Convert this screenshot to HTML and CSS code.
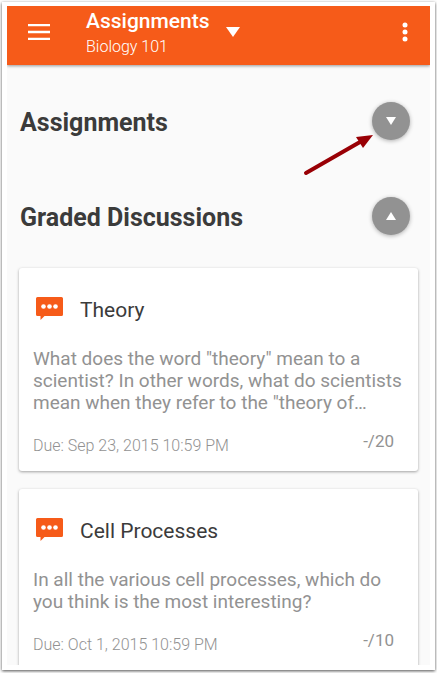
FILE: index.html
```
<!DOCTYPE html>
<html lang="en">
<head>
    <meta charset="UTF-8">
    <meta name="viewport" content="width=device-width, initial-scale=1.0">
    <title>Assignments - Biology 101</title>
    <link rel="stylesheet" href="styles.css">
</head>
<body>

    <div class="frame">
        <div class="screen">
            <header class="toolbar">
                <button class="icon-btn" aria-label="Menu">
                    <svg width="22" height="16" viewBox="0 0 22 16"><path d="M0 1h22M0 8h22M0 15h22" stroke="#fff" stroke-width="2.300"/></svg>
                </button>
                <button class="course">
                    <span class="course-text">
                        <span class="course-title">Assignments</span>
                        <span class="course-name">Biology 101</span>
                    </span>
                    <svg width="14" height="10" viewBox="0 0 14 10"><path d="M0 0h14L7 10z" fill="#fff"/></svg>
                </button>
                <button class="icon-btn more" aria-label="More options">
                    <svg width="6" height="20" viewBox="0 0 6 20" fill="#fff"><circle cx="3" cy="3" r="2.500"/><circle cx="3" cy="10" r="2.500"/><circle cx="3" cy="17" r="2.500"/></svg>
                </button>
            </header>

            <main>
                <section class="group">
                    <h2>Assignments</h2>
                    <button class="toggle" aria-label="Expand Assignments">
                        <svg width="10" height="8" viewBox="0 0 10 8"><path d="M0 0h10L5 8z" fill="#fff"/></svg>
                    </button>
                    <svg class="arrow" width="70" height="42" viewBox="0 0 70 42">
                        <path d="M3 39L57 8" stroke="#990005" stroke-width="4" stroke-linecap="round"/>
                        <path d="M70 1L53 3l7 11z" fill="#990005"/>
                    </svg>
                </section>

                <section class="group">
                    <h2>Graded Discussions</h2>
                    <button class="toggle" aria-label="Collapse Graded Discussions">
                        <svg width="10" height="8" viewBox="0 0 10 8"><path d="M0 8h10L5 0z" fill="#fff"/></svg>
                    </button>
                </section>

                <div class="cards">
                    <article class="card">
                        <h3>
                            <svg width="27" height="23" viewBox="0 0 27 23"><path d="M1.500 0h24a1.500 1.500 0 0 1 1.500 1.500v16a1.500 1.500 0 0 1-1.500 1.500H8.500l-4 4v-4h-3a1.500 1.500 0 0 1-1.500-1.500v-16a1.500 1.500 0 0 1 1.500-1.500z" fill="#f65b19"/><g fill="#fff"><circle cx="7.500" cy="9.500" r="2.300"/><circle cx="13.500" cy="9.500" r="2.300"/><circle cx="19.500" cy="9.500" r="2.300"/></g></svg>
                            Theory
                        </h3>
                        <p>What does the word "theory" mean to a scientist? In other words, what do scientists mean when they refer to the "theory of…</p>
                        <div class="meta">
                            <span class="due">Due: Sep 23, 2015 10:59 PM</span>
                            <span class="score">-/20</span>
                        </div>
                    </article>

                    <article class="card">
                        <h3>
                            <svg width="27" height="23" viewBox="0 0 27 23"><path d="M1.500 0h24a1.500 1.500 0 0 1 1.500 1.500v16a1.500 1.500 0 0 1-1.500 1.500H8.500l-4 4v-4h-3a1.500 1.500 0 0 1-1.500-1.500v-16a1.500 1.500 0 0 1 1.500-1.500z" fill="#f65b19"/><g fill="#fff"><circle cx="7.500" cy="9.500" r="2.300"/><circle cx="13.500" cy="9.500" r="2.300"/><circle cx="19.500" cy="9.500" r="2.300"/></g></svg>
                            Cell Processes
                        </h3>
                        <p>In all the various cell processes, which do you think is the most interesting?</p>
                        <div class="meta">
                            <span class="due">Due: Oct 1, 2015 10:59 PM</span>
                            <span class="score">-/10</span>
                        </div>
                    </article>
                </div>
            </main>
        </div>
    </div>

</body>
</html>
```
FILE: styles.css
```
* {
    box-sizing: border-box;
}
body {
    margin: 0;
    height: 100vh;
    padding: 2px 2px 3px;
    background: #fff;
    font-family: Roboto, "Liberation Sans", sans-serif;
}
.frame {
    height: 100%;
    padding: 4px 5px 5px;
    background: #fff;
    box-shadow: 0 1px 3px rgba(0, 0, 0, 0.7);
}
.screen {
    height: 100%;
    overflow: hidden;
    background: #fafafa;
}
button {
    padding: 0;
    border: none;
    background: none;
    color: inherit;
    font-family: inherit;
    text-align: left;
    cursor: pointer;
}
svg {
    display: block;
    flex: none;
}

/* Toolbar */
.toolbar {
    display: flex;
    align-items: center;
    height: 59px;
    padding: 0 22px 0 21px;
    background: #f65b19;
    color: #fff;
    box-shadow: 0 1px 3px rgba(0, 0, 0, 0.4);
}
.icon-btn {
    height: 100%;
    padding-bottom: 8px;
}
.more {
    margin-left: auto;
}
.course {
    display: flex;
    align-items: center;
    gap: 16px;
    height: 100%;
    margin-left: 36px;
    padding-bottom: 4px;
}
.course svg {
    margin-bottom: 4px;
}
.course-title,
.course-name {
    display: block;
    line-height: 26px;
}
.course-title {
    font-size: 21px;
    font-weight: 500;
}
.course-name {
    font-size: 16px;
    font-weight: 300;
}

/* Assignment groups */
.group {
    position: relative;
    display: flex;
    align-items: center;
    justify-content: space-between;
    height: 95px;
    padding: 0 20px 0 13px;
}
.group:first-child {
    margin-top: 8px;
}
h2 {
    margin: 0;
    padding-top: 4px;
    color: #3b3b3b;
    font-size: 25px;
    font-weight: 700;
    line-height: 30px;
}
.toggle {
    display: flex;
    align-items: center;
    justify-content: center;
    width: 38px;
    height: 38px;
    border-radius: 50%;
    background: #929292;
    box-shadow: 0 1px 4px rgba(0, 0, 0, 0.3);
}
.arrow {
    position: absolute;
    top: 61px;
    right: 57px;
}

/* Cards */
.cards {
    display: grid;
    gap: 18px;
    padding: 5px 12px 18px;
}
.card {
    padding: 28px 12px 14px 14px;
    border-radius: 3px;
    background: #fff;
    box-shadow: 0 1px 3px rgba(0, 0, 0, 0.36);
}
h3 {
    display: flex;
    align-items: center;
    gap: 17px;
    margin: 0;
    padding-left: 3px;
    color: #3b3b3b;
    font-size: 21px;
    font-weight: 400;
    line-height: 28px;
}
h3 svg {
    margin-bottom: 4px;
}
p {
    margin: 24px 0 21px;
    color: #929292;
    font-size: 19px;
    line-height: 22px;
}
.meta {
    display: flex;
    justify-content: space-between;
    padding-right: 12px;
    color: #929292;
    line-height: 22px;
}
.due {
    font-size: 16px;
    font-weight: 300;
}
.score {
    margin-top: -5px;
    font-size: 17px;
}
```
